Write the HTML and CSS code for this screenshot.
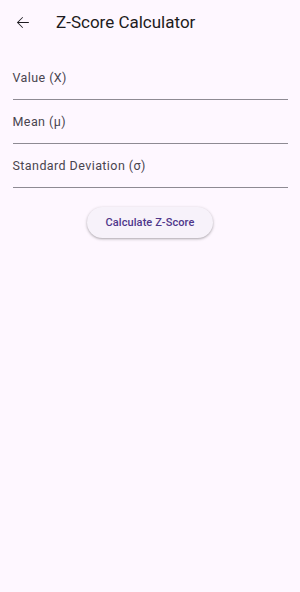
FILE: index.html
```html
<!DOCTYPE html>
<html>
<head>
<meta charset="utf-8">
<link rel="stylesheet" href="styles.css">
</head>
<body>
<div class="app">
  <header class="appbar">
    <button class="back" aria-label="Back">
      <svg width="19" height="19" viewBox="0 0 24 24"><path d="M20 11.25H7.1l5.6-5.6L12 4.9 4.9 12l7.1 7.1.7-.75-5.6-5.6H20v-1.5z" fill="#1d1b20"/></svg>
    </button>
    <h1 class="title">Z-Score Calculator</h1>
  </header>
  <main class="body">
    <div class="field"><span class="label">Value (X)</span></div>
    <div class="field"><span class="label">Mean (μ)</span></div>
    <div class="field"><span class="label">Standard Deviation (σ)</span></div>
    <div class="actions">
      <button class="btn">Calculate Z-Score</button>
    </div>
  </main>
</div>
</body>
</html>
```
FILE: styles.css
```css
html, body {
  margin: 0;
  padding: 0;
  background: #fef7ff;
}
body {
  font-family: Roboto, "Noto Sans", sans-serif;
  color: #1d1b20;
  width: 300px;
  height: 592px;
  overflow: hidden;
}
.appbar {
  height: 44px;
  display: flex;
  align-items: center;
}
.back {
  width: 44px;
  height: 44px;
  border: 0;
  background: none;
  padding: 0;
  display: flex;
  align-items: center;
  justify-content: center;
}
.title {
  margin: 0 0 0 12px;
  font-size: 17px;
  font-weight: 400;
  color: #1d1b20;
}
.body {
  padding: 12px 12.5px;
}
.field {
  height: 43px;
  border-bottom: 1px solid #8e8a93;
  display: flex;
  align-items: center;
}
.label {
  font-size: 12.5px;
  color: #49454f;
  letter-spacing: 0.42px;
}
.actions {
  display: flex;
  justify-content: center;
  padding-top: 19px;
}
.btn {
  height: 31px;
  padding: 0 18.5px;
  border: 0;
  border-radius: 16px;
  background: #f7f2fa;
  color: #4f378b;
  font-family: Roboto, sans-serif;
  font-size: 11px;
  font-weight: 500;
  letter-spacing: 0.08px;
  box-shadow: 0 1px 2px rgba(0,0,0,0.22), 0 1px 3px 1px rgba(0,0,0,0.09);
}
```
